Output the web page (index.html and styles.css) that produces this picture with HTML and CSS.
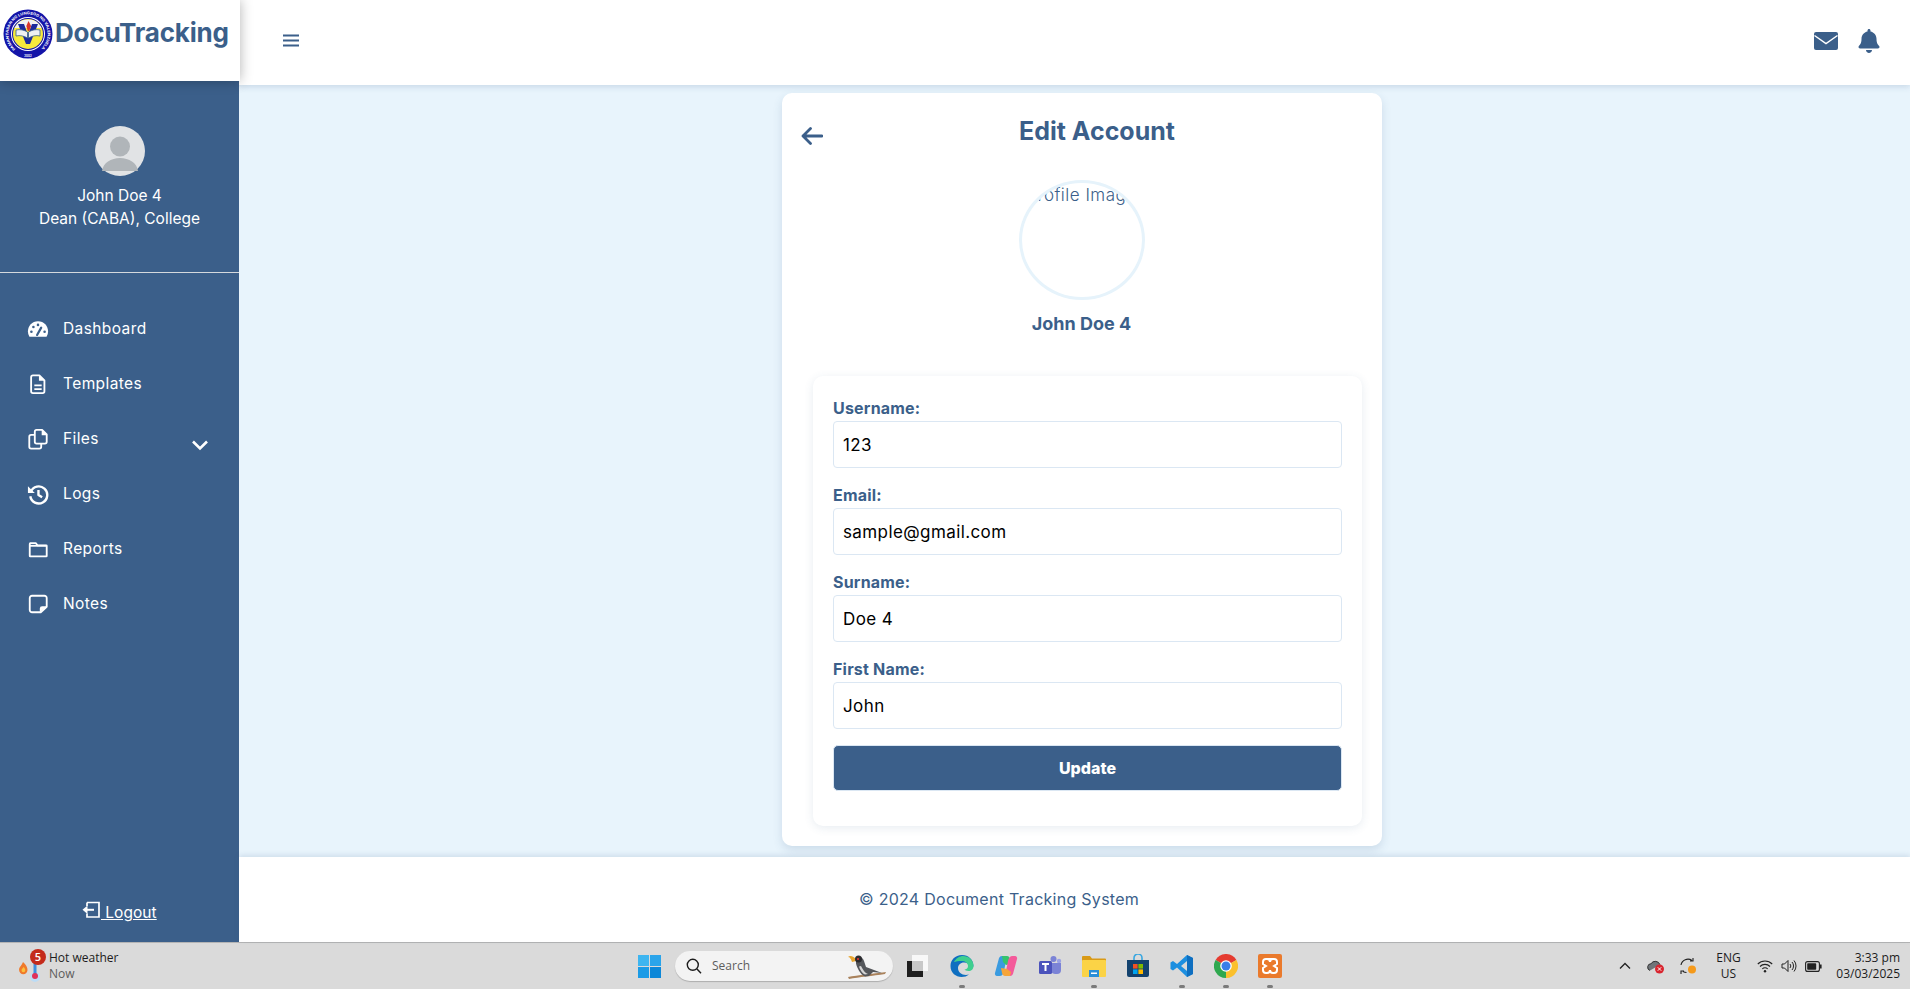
FILE: index.html
```html
<!DOCTYPE html>
<html lang="en">

<head>
  <meta charset="UTF-8">
  <title>DocuTracking - Edit Account</title>
  <link rel="stylesheet" href="styles.css">
</head>

<body>
  <div class="app">
    <aside class="sidebar">
      <div class="brand">
        <svg class="brand-logo" viewBox="0 0 50 50">
          <defs>
            <path id="ring-text" d="M12.400 40a19.600 19.600 0 1 1 25.200 0"></path>
          </defs>
          <circle cx="25" cy="25" r="24.500" fill="#1414a8"></circle>
          <circle cx="25" cy="25" r="17" fill="#fff"></circle>
          <circle cx="25" cy="25" r="16" fill="#1414a8"></circle>
          <circle cx="25" cy="25" r="15" fill="#f7ea3c"></circle>
          <path d="M11.500 19a15 15 0 0 1 27 0z" fill="#f1f2f4"></path>
          <path d="M15 15h6l4 11 4-11h6l-8 20h-4z" fill="#1c2a9c"></path>
          <path d="M13 21c4-1 8 0 11.500 2v6c-3.500-2-7.500-3-11.500-2z" fill="#eef0f3" stroke="#3b5f8a" stroke-width=".8"></path>
          <path d="M37 21c-4-1-8 0-11.500 2v6c3.500-2 7.500-3 11.500-2z" fill="#eef0f3" stroke="#3b5f8a" stroke-width=".8"></path>
          <path d="M25.500 12l-2.200 5 1.500 5h1.500l1.800-5z" fill="#d8352a"></path>
          <text class="logo-ring-text"><textPath href="#ring-text" textLength="94" lengthAdjust="spacingAndGlyphs">PAMANTASAN NG LUNGSOD NG VALENZUELA</textPath></text>
          <text class="logo-year" x="25" y="47.600" text-anchor="middle">2002</text>
        </svg>
        <span class="brand-name">DocuTracking</span>
      </div>

      <div class="profile">
        <svg class="profile-avatar" viewBox="0 0 50 50">
          <circle cx="25" cy="25" r="25" fill="#e1e3e5"></circle>
          <circle cx="25" cy="20.500" r="10" fill="#b0b5b9"></circle>
          <path d="M7 45c1-8 9-13 18-13s17 5 18 13z" fill="#b0b5b9"></path>
        </svg>
        <div class="profile-name">John Doe 4</div>
        <div class="profile-role">Dean (CABA), College</div>
      </div>

      <nav class="nav">
        <a class="nav-item" href="#">
          <svg class="nav-icon" viewBox="0 0 24 24">
            <path fill="#fff" d="M12 3.500C5.600 3.500 1 8.600 1 14.600c0 1.900.5 3.700 1.400 5.300.2.300.5.6.9.6h17.400c.4 0 .7-.3.9-.6.9-1.600 1.400-3.400 1.400-5.300C23 8.600 18.400 3.500 12 3.500z"></path>
            <g fill="#3b5f8a">
              <circle cx="4.800" cy="15" r="1.400"></circle>
              <circle cx="7" cy="9.800" r="1.400"></circle>
              <circle cx="12" cy="7.500" r="1.400"></circle>
              <circle cx="19.200" cy="15" r="1.400"></circle>
            </g>
            <path d="M11 18.500l4.500-8" stroke="#3b5f8a" stroke-width="2.400" stroke-linecap="round"></path>
          </svg>
          <span>Dashboard</span>
        </a>
        <a class="nav-item" href="#">
          <svg class="nav-icon" viewBox="0 0 24 24">
            <path class="line" d="M6.500 2.500h7l5.500 5.500v12a2 2 0 0 1-2 2H6.500a2 2 0 0 1-2-2v-15.500a2 2 0 0 1 2-2z"></path>
            <path d="M13 2.500l6 6h-6z" fill="#fff"></path>
            <path class="line" d="M8 13.500h8M8 17.500h8"></path>
          </svg>
          <span>Templates</span>
        </a>
        <a class="nav-item" href="#">
          <svg class="nav-icon" viewBox="0 0 24 24">
            <path class="line" d="M10.500 2h6l5 5v8a2 2 0 0 1-2 2h-9a2 2 0 0 1-2-2v-11a2 2 0 0 1 2-2z"></path>
            <path d="M16 2l6 6h-6z" fill="#fff"></path>
            <path class="line" d="M8.500 7.500h-4a2 2 0 0 0-2 2v11a2 2 0 0 0 2 2h9a2 2 0 0 0 2-2v-3.500"></path>
          </svg>
          <span>Files</span>
          <svg class="nav-chevron" viewBox="0 0 18 12">
            <path d="M2 2.500l7 7 7-7"></path>
          </svg>
        </a>
        <a class="nav-item" href="#">
          <svg class="nav-icon" viewBox="0 0 24 24">
            <path class="line thick" d="M4.200 9.500a9.300 9.300 0 1 1-.6 5"></path>
            <path d="M1 3.500v7.500h7.500z" fill="#fff"></path>
            <path class="line thick" d="M12.500 7.500v5.500l4 2.500"></path>
          </svg>
          <span>Logs</span>
        </a>
        <a class="nav-item" href="#">
          <svg class="nav-icon" viewBox="0 0 24 24">
            <path class="line" d="M3 7a2 2 0 0 1 .5-1.500h6l2 2.500h9.500a.5.5 0 0 1 .5.5v11a.5.5 0 0 1-.5.5h-17.500a.5.5 0 0 1-.5-.5z"></path>
            <path class="line" d="M3 8.500h18"></path>
          </svg>
          <span>Reports</span>
        </a>
        <a class="nav-item" href="#">
          <svg class="nav-icon" viewBox="0 0 24 24">
            <path class="line" d="M5.500 3h13.500a2.500 2.500 0 0 1 2.500 2.500v9.500l-6.500 6h-9.500a2.500 2.500 0 0 1-2.500-2.500v-13a2.500 2.500 0 0 1 2.500-2.500z"></path>
            <path d="M14 21v-4a2.500 2.500 0 0 1 2.500-2.500h5z" fill="#fff"></path>
          </svg>
          <span>Notes</span>
        </a>
      </nav>

      <a class="logout" href="#">
        <svg class="logout-icon" viewBox="0 0 20 18">
          <path d="M6 1.500h12v14.500h-12v-3.500M6 5v-3.500" fill="none" stroke="#fff" stroke-width="1.700"></path>
          <path d="M13 8.800h-9" fill="none" stroke="#fff" stroke-width="2"></path>
          <path d="M6.500 4.500l-5 4.300 5 4.300z" fill="#fff"></path>
        </svg>
        <span class="logout-text">&nbsp;Logout</span>
      </a>
    </aside>

    <div class="content">
      <header class="topbar">
        <svg class="menu-icon" viewBox="0 0 16 13">
          <path d="M0 1.500h16M0 6.500h16M0 11.500h16"></path>
        </svg>
        <div class="topbar-actions">
          <svg class="mail-icon" viewBox="0 0 24 18">
            <rect width="24" height="18" rx="2" fill="#3b5f8a"></rect>
            <path d="M0.500 3.500l11.500 8 11.500-8" fill="none" stroke="#fff" stroke-width="1.500"></path>
          </svg>
          <svg class="bell-icon" viewBox="0 0 448 512">
            <path fill="#3b5f8a" d="M224 512c35.320 0 63.970-28.650 63.970-64H160.030c0 35.350 28.650 64 63.970 64zm215.390-149.710c-19.320-20.760-55.470-51.990-55.470-154.290 0-77.700-54.480-139.900-127.940-155.160V32c0-17.670-14.320-32-31.980-32s-31.980 14.330-31.980 32v20.840C118.560 68.100 64.080 130.300 64.080 208c0 102.300-36.150 133.530-55.470 154.290-6 6.450-8.660 14.160-8.610 21.710.11 16.400 12.980 32 32.100 32h383.800c19.120 0 32-15.600 32.100-32 .05-7.550-2.610-15.270-8.610-21.710z"></path>
          </svg>
        </div>
      </header>

      <main class="main">
        <section class="card">
          <div class="card-head">
            <svg class="back-icon" viewBox="0 0 22 18">
              <path d="M21 9H2M9.500 1.500L2 9l7.500 7.500"></path>
            </svg>
            <h2 class="card-title">Edit Account</h2>
          </div>

          <div class="photo">
            <div class="photo-frame">Profile Image</div>
            <div class="photo-name">John Doe 4</div>
          </div>

          <form class="form-box">
            <div class="field">
              <label for="username">Username:</label>
              <input type="text" id="username" value="123">
            </div>
            <div class="field">
              <label for="email">Email:</label>
              <input type="text" id="email" value="sample@gmail.com">
            </div>
            <div class="field">
              <label for="surname">Surname:</label>
              <input type="text" id="surname" value="Doe 4">
            </div>
            <div class="field">
              <label for="firstname">First Name:</label>
              <input type="text" id="firstname" value="John">
            </div>
            <button class="btn-update" type="button">Update</button>
          </form>
        </section>
      </main>

      <footer class="footer">© 2024 Document Tracking System</footer>
    </div>
  </div>

  <div class="taskbar">
    <div class="weather">
      <svg class="weather-icon" viewBox="0 0 34 34">
        <path d="M7 13c3 3 4.500 5 4.500 8a4.200 4.200 0 0 1-8.400 0c0-3 2-3.500 3.900-8z" fill="#f0792a"></path>
        <path d="M7.500 18c1.300 1.200 1.800 2.200 1.800 3.300a1.900 1.900 0 0 1-3.800 0c0-1.300 1.200-2 2-3.300z" fill="#fbc13c"></path>
        <circle cx="19" cy="28" r="5" fill="#bcdcf5"></circle>
        <rect x="17.500" y="10" width="3" height="16" fill="#3d8fe0"></rect>
        <circle cx="19" cy="27" r="3" fill="#e0305a"></circle>
        <circle class="weather-badge" cx="22" cy="8" r="8" fill="#c42b1c"></circle>
        <text class="weather-count" x="22" y="12" text-anchor="middle">5</text>
      </svg>
      <div class="weather-text">
        <div>Hot weather</div>
        <div class="weather-sub">Now</div>
      </div>
    </div>

    <svg class="start-icon" viewBox="0 0 23 23">
      <rect width="11" height="11" fill="#3db5f0"></rect>
      <rect x="12" width="11" height="11" fill="#2aa4ea"></rect>
      <rect y="12" width="11" height="11" fill="#1b9be6"></rect>
      <rect x="12" y="12" width="11" height="11" fill="#0c87d8"></rect>
    </svg>

    <div class="search">
      <svg class="search-icon" viewBox="0 0 16 16">
        <circle cx="6.800" cy="6.800" r="5.500"></circle>
        <path d="M11 11l4 4.300"></path>
      </svg>
      <span class="search-label">Search</span>
      <svg class="search-bird" viewBox="0 0 40 28">
        <path d="M1 25c10-2 24-3 38-5l-1 2c-12 2-26 3-36 5z" fill="#a9825c"></path>
        <path d="M9 7c3-3 7-2 8 2l2 6 16 6-9-1-4 4-4 .5c-5-2-8-9-9-13z" fill="#54565a"></path>
        <path d="M14 14c2 4 4 7 7 8l-3 .5c-3-1-5-5-6-8z" fill="#d5d5d5"></path>
        <path d="M9 7C6 4 3 3 1 5c2 0 3 2 4 5l4-1z" fill="#e8a52f"></path>
        <circle cx="11.500" cy="7" r="3.500" fill="#2b2b2f"></circle>
        <circle cx="11" cy="7" r="1" fill="#e33"></circle>
      </svg>
    </div>

    <div class="dock">
      <div class="dock-item">
        <svg class="dock-icon" viewBox="0 0 24 24">
          <rect x="6" y="1" width="16" height="16" fill="#f8f8f8"></rect>
          <rect x="1" y="7" width="16" height="16" fill="#1e1e1e"></rect>
          <rect x="6" y="7" width="11" height="10" fill="#c8c8c8"></rect>
        </svg>
      </div>
      <div class="dock-item is-open">
        <svg class="dock-icon" viewBox="0 0 24 24">
          <path d="M12 1C5 1 .5 6 .5 12c0 7 5.500 11 11 11 3 0 5.500-.8 7.500-2.500-6 1.500-11-1.500-11-6.500 0-3 2.500-5.500 6-5.500 3 0 5 1.500 5 4h4.500C23.500 5.500 18.500 1 12 1z" fill="#0f6fc0"></path>
          <path d="M4 8c2-4 6-6 9-6 6 0 10.500 4 10.500 10 0 3-2 5-5 5-2 0-3.500-.8-4-1.500 2 0 3.500-1.500 3.500-3.500 0-3-3-5-6.500-5-3 0-6 .5-7.500 1z" fill="#3fcf8e"></path>
        </svg>
      </div>
      <div class="dock-item">
        <svg class="dock-icon" viewBox="0 0 24 24">
          <path d="M8 2h5l-3 15c-.5 3-2 5-4.500 5H3c-1.500 0-2.500-1.500-2-3L4.500 6C5 3.500 6 2 8 2z" fill="#3a9be0"></path>
          <path d="M8 2h5c1.500 0 2.500 1 3 3l1 5-5 1-3-3z" fill="#35c46e"></path>
          <path d="M16 22h-5l3-15c.5-3 2-5 4.500-5H21c1.500 0 2.500 1.500 2 3l-3.500 13c-.5 2.500-1.500 4-3.500 4z" fill="#f45a9a"></path>
          <path d="M16 22h-5c-1.500 0-2.500-1-3-3l-1-5 6 1 4 3z" fill="#f5a53a"></path>
        </svg>
      </div>
      <div class="dock-item">
        <svg class="dock-icon" viewBox="0 0 24 24">
          <circle cx="15.500" cy="5" r="3" fill="#7b83d6"></circle>
          <circle cx="21" cy="7" r="2.200" fill="#9aa2e6"></circle>
          <path d="M12 9h11v7a4 4 0 0 1-4 4h-2a5 5 0 0 1-5-5z" fill="#7b83d6"></path>
          <rect x="1" y="7" width="13" height="13" rx="1.500" fill="#4b53bc"></rect>
          <path d="M4 10h7M7.500 10v7" stroke="#fff" stroke-width="2"></path>
        </svg>
      </div>
      <div class="dock-item is-open">
        <svg class="dock-icon" viewBox="0 0 24 24">
          <path d="M0 3a1 1 0 0 1 1-1h7l2 2.500h13a1 1 0 0 1 1 1V8H0z" fill="#d99a16"></path>
          <rect y="6" width="24" height="17" rx="1" fill="#fbd346"></rect>
          <rect x="7" y="16" width="10" height="7" fill="#2b8fd8"></rect>
          <rect x="9" y="18.500" width="6" height="1.500" fill="#fff"></rect>
        </svg>
      </div>
      <div class="dock-item">
        <svg class="dock-icon" viewBox="0 0 24 24">
          <path d="M8 6V4a4 4 0 0 1 8 0v2" fill="none" stroke="#3aa7e0" stroke-width="1.600"></path>
          <path d="M1 6h22v15a2 2 0 0 1-2 2H3a2 2 0 0 1-2-2z" fill="#13426e"></path>
          <rect x="7" y="10" width="4.600" height="4.600" fill="#f25022"></rect>
          <rect x="12.400" y="10" width="4.600" height="4.600" fill="#7fba00"></rect>
          <rect x="7" y="15.400" width="4.600" height="4.600" fill="#00a4ef"></rect>
          <rect x="12.400" y="15.400" width="4.600" height="4.600" fill="#ffb900"></rect>
        </svg>
      </div>
      <div class="dock-item is-open">
        <svg class="dock-icon" viewBox="0 0 24 24">
          <path d="M17 1l6 3v16l-6 3-10-9.500-4 3-2.500-1.500v-6.500l2.500-1.500 4 3z" fill="#1d8fe0"></path>
          <path d="M17 1l6 3v16l-6 3z" fill="#0f6fc0"></path>
          <path d="M17 7l-6 5 6 5z" fill="#dadada"></path>
        </svg>
      </div>
      <div class="dock-item is-open">
        <svg class="dock-icon" viewBox="0 0 24 24">
          <path d="M12 12L22.400 6A12 12 0 0 0 1.600 6z" fill="#e53b30"></path>
          <path d="M12 12L1.600 6A12 12 0 0 0 12 24z" fill="#2fa84f"></path>
          <path d="M12 12v12A12 12 0 0 0 22.400 6z" fill="#fbc02d"></path>
          <circle cx="12" cy="12" r="5.800" fill="#fff"></circle>
          <circle cx="12" cy="12" r="4.500" fill="#3a7fe8"></circle>
        </svg>
      </div>
      <div class="dock-item is-open">
        <svg class="dock-icon" viewBox="0 0 24 24">
          <rect width="24" height="24" rx="2" fill="#ea7a2c"></rect>
          <path d="M8 5h8M5 8v2l3 2-3 2v2a3 3 0 0 0 3 3h1a3 3 0 0 0 3-3 3 3 0 0 0 3 3h1a3 3 0 0 0 3-3v-2l-3-2 3-2V8a3 3 0 0 0-3-3h-1a3 3 0 0 0-3 3 3 3 0 0 0-3-3H8a3 3 0 0 0-3 3z" fill="none" stroke="#fff" stroke-width="2"></path>
        </svg>
      </div>
    </div>

    <div class="tray">
      <div class="tray-item tray-caret">
        <svg viewBox="0 0 12 8" width="12" height="8"><path d="M1 6.500l5-5 5 5" fill="none" stroke="#222" stroke-width="1.300"></path></svg>
      </div>
      <div class="tray-item tray-wide">
        <svg viewBox="0 0 18 16" width="18" height="16">
          <path d="M3 12.500a3.500 3.500 0 0 1 1-6.800 5 5 0 0 1 9 1" fill="#70757a" stroke="#333" stroke-width="1"></path>
          <circle cx="12.500" cy="11" r="4.500" fill="#d9252f"></circle>
          <path d="M10.800 9.300l3.400 3.400M14.200 9.300l-3.400 3.400" stroke="#fff" stroke-width="1"></path>
        </svg>
      </div>
      <div class="tray-item tray-wide">
        <svg viewBox="0 0 18 18" width="18" height="18">
          <path d="M2 8a7 7 0 0 1 11-4.500M14 1v3h-3M2 17v-3h3M4 14.500c1 .6 2 1 3.500 1" fill="none" stroke="#222" stroke-width="1.100"></path>
          <circle cx="13" cy="12.500" r="4" fill="#f59a1b"></circle>
        </svg>
      </div>
      <div class="tray-lang">
        <div>ENG</div>
        <div>US</div>
      </div>
      <div class="tray-item">
        <svg viewBox="0 0 16 14" width="16" height="14">
          <path d="M.8 5a10 10 0 0 1 14.400 0M3 7.500a7 7 0 0 1 10 0M5.300 10a3.600 3.600 0 0 1 5.400 0" fill="none" stroke="#222" stroke-width="1.100"></path>
          <circle cx="8" cy="12.300" r="1.200" fill="#222"></circle>
        </svg>
      </div>
      <div class="tray-item">
        <svg viewBox="0 0 16 14" width="16" height="14">
          <path d="M1 5h2.500L7 1.500v11L3.500 9H1z" fill="none" stroke="#222" stroke-width="1"></path>
          <path d="M9 5a3 3 0 0 1 0 4M11 3a6 6 0 0 1 0 8M13 1.500a8.500 8.500 0 0 1 0 11" fill="none" stroke="#222" stroke-width="1"></path>
        </svg>
      </div>
      <div class="tray-item">
        <svg viewBox="0 0 17 11" width="17" height="11">
          <rect x=".6" y=".6" width="13.800" height="9.800" rx="2" fill="none" stroke="#222" stroke-width="1.100"></rect>
          <rect x="2.200" y="2.200" width="9" height="6.600" rx=".8" fill="#222"></rect>
          <rect x="15" y="3.500" width="1.600" height="4" fill="#222"></rect>
        </svg>
      </div>
      <div class="tray-clock">
        <div>3:33 pm</div>
        <div>03/03/2025</div>
      </div>
    </div>
  </div>
</body>

</html>
```

FILE: styles.css
```css
* {
  box-sizing: border-box;
}

body {
  margin: 0;
  height: 100vh;
  display: flex;
  flex-direction: column;
  overflow: hidden;
  font-family: Inter, "Liberation Sans", sans-serif;
  color: #3b5f8a;
  background-color: #e8f4fc;
}

.app {
  flex: 1;
  display: flex;
  min-height: 0;
}

/* sidebar */
.sidebar {
  width: 239px;
  flex-shrink: 0;
  display: flex;
  flex-direction: column;
  background-color: #3b5f8a;
  color: #fff;
}

.brand {
  width: 240px;
  height: 81px;
  flex-shrink: 0;
  display: flex;
  align-items: flex-start;
  padding: 9px 0 0 3px;
  background-color: #fff;
  box-shadow: 0 0 12px rgba(0, 0, 0, 0.3);
  position: relative;
  z-index: 3;
}

.brand-logo {
  width: 50px;
  height: 50px;
  flex-shrink: 0;
}

.logo-ring-text {
  font-size: 3.700px;
  font-weight: 700;
  fill: #fff;
}

.logo-year {
  font-size: 2.800px;
  font-weight: 700;
  fill: #fff;
}

.brand-name {
  margin: 5px 0 0 2px;
  font-size: 26px;
  line-height: 38px;
  font-weight: 700;
  letter-spacing: -0.2px;
  color: #3b5f8a;
}

.profile {
  display: flex;
  flex-direction: column;
  align-items: center;
  padding-top: 45px;
  height: 192px;
  border-bottom: 1px solid #d5d9dd;
  font-size: 15.500px;
  line-height: 23px;
}

.profile-avatar {
  width: 50px;
  height: 50px;
  margin-bottom: 8px;
}

.nav {
  display: flex;
  flex-direction: column;
  padding-top: 28px;
}

.nav-item {
  height: 55px;
  display: flex;
  align-items: center;
  padding-left: 27px;
  color: #fff;
  text-decoration: none;
  font-size: 15.500px;
  letter-spacing: 0.4px;
}

.nav-icon {
  width: 22px;
  height: 22px;
  margin-right: 14px;
  flex-shrink: 0;
}

.line {
  fill: none;
  stroke: #fff;
  stroke-width: 2;
  stroke-linejoin: round;
}

.line.thick {
  stroke-width: 2.600;
}

.nav-chevron {
  width: 18px;
  height: 12px;
  margin: 12px 0 0 auto;
  margin-right: 30px;
}

.nav-chevron path {
  fill: none;
  stroke: #fff;
  stroke-width: 2.600;
}

.logout {
  margin: auto 0 18px 81px;
  display: flex;
  align-items: flex-end;
  color: #fff;
  font-size: 15.500px;
  line-height: 22px;
}

.logout-icon {
  width: 20px;
  height: 18px;
  margin-bottom: 5px;
}

.logout-text {
  text-decoration: underline;
}

/* main column */
.content {
  flex: 1;
  min-width: 0;
  display: flex;
  flex-direction: column;
}

.topbar {
  height: 85px;
  flex-shrink: 0;
  display: flex;
  align-items: center;
  justify-content: space-between;
  padding: 0 30px 4px 44px;
  background-color: #fff;
  box-shadow: 0 2px 6px rgba(59, 95, 138, 0.18);
  position: relative;
  z-index: 2;
}

.menu-icon {
  width: 16px;
  height: 13px;
}

.menu-icon path {
  fill: none;
  stroke: #3b5f8a;
  stroke-width: 2;
}

.topbar-actions {
  display: flex;
  align-items: center;
  gap: 20px;
}

.mail-icon {
  width: 24px;
  height: 18px;
}

.bell-icon {
  width: 22px;
  height: 24px;
}

.main {
  flex: 1;
  min-height: 0;
  padding: 8px 0 0 543px;
}

.card {
  width: 600px;
  height: 753px;
  padding: 20px 20px 0 19px;
  background-color: #fff;
  border-radius: 10px;
  box-shadow: 0 4px 10px rgba(59, 95, 138, 0.16);
}

.card-head {
  display: flex;
  align-items: flex-start;
}

.back-icon {
  width: 22px;
  height: 18px;
  margin-top: 14px;
  flex-shrink: 0;
}

.back-icon path {
  fill: none;
  stroke: #3b5f8a;
  stroke-width: 2.800;
  stroke-linecap: round;
  stroke-linejoin: round;
}

.card-title {
  flex: 1;
  margin: 0 -9px 0 0;
  text-align: center;
  font-size: 25px;
  line-height: 36px;
  font-weight: 700;
}

.photo {
  display: flex;
  flex-direction: column;
  align-items: center;
  margin-top: 31px;
}

.photo-frame {
  width: 126px;
  height: 120px;
  border: 3px solid #e6f3fb;
  border-radius: 50%;
  overflow: hidden;
  text-align: center;
  white-space: nowrap;
  font-size: 17px;
  letter-spacing: 0.5px;
  line-height: 24px;
  font-weight: 300;
}

.photo-name {
  margin-top: 12px;
  font-size: 18px;
  line-height: 24px;
  font-weight: 700;
}

.form-box {
  display: flex;
  flex-direction: column;
  gap: 15px;
  width: 549px;
  height: 450px;
  margin: 40px 0 0 12px;
  padding: 20px 20px 0;
  background-color: #fff;
  border-radius: 10px;
  box-shadow: 0 2px 10px rgba(59, 95, 138, 0.12);
}

.field label {
  display: block;
  margin-bottom: 1px;
  font-size: 16px;
  line-height: 24px;
  font-weight: 700;
  letter-spacing: 0.2px;
}

.field input {
  display: block;
  width: 100%;
  height: 47px;
  padding: 0 9px;
  border: 1px solid #dbe7f3;
  border-radius: 4px;
  outline: none;
  font-family: inherit;
  font-size: 17px;
  letter-spacing: 0.4px;
  color: #000;
  background-color: #fff;
}

.btn-update {
  height: 46px;
  margin-top: 1px;
  border: 1px solid #dbe7f3;
  border-radius: 5px;
  background-color: #3b5f8a;
  color: #fff;
  font-family: inherit;
  font-size: 16px;
  font-weight: 800;
}

.footer {
  height: 85px;
  flex-shrink: 0;
  padding: 30px 0 0 620px;
  background-color: #fff;
  font-size: 16px;
  letter-spacing: 0.27px;
  line-height: 24px;
  box-shadow: 0 -2px 5px rgba(59, 95, 138, 0.14);
  position: relative;
}

/* windows taskbar */
.taskbar {
  height: 47px;
  flex-shrink: 0;
  display: flex;
  align-items: center;
  border-top: 1px solid #b4b4b4;
  background-color: #dadada;
  font-family: "Open Sans", "Noto Sans", sans-serif;
  font-size: 12px;
  line-height: 16px;
  color: #1c1c1c;
}

.weather {
  width: 638px;
  flex-shrink: 0;
  display: flex;
  align-items: center;
  padding-left: 16px;
}

.weather-icon {
  width: 34px;
  height: 34px;
  margin-right: -1px;
}

.weather-count {
  font-size: 11px;
  font-weight: 600;
  fill: #fff;
}

.weather-sub {
  color: #5c5c5c;
}

.start-icon {
  width: 23px;
  height: 23px;
  flex-shrink: 0;
}

.search {
  width: 218px;
  height: 30px;
  margin: 0 3px 0 14px;
  flex-shrink: 0;
  display: flex;
  align-items: center;
  padding: 0 6px 0 11px;
  background-color: #f3f3f3;
  border-radius: 15px;
  box-shadow: 0 1px 1px rgba(0, 0, 0, 0.2);
}

.search-icon {
  width: 16px;
  height: 16px;
}

.search-icon circle,
.search-icon path {
  fill: none;
  stroke: #1c1c1c;
  stroke-width: 1.400;
}

.search-label {
  margin-left: 10px;
  color: #5d5d5d;
}

.search-bird {
  width: 40px;
  height: 28px;
  margin-left: auto;
}

.dock {
  display: flex;
}

.dock-item {
  width: 44px;
  height: 47px;
  display: flex;
  align-items: center;
  justify-content: center;
  position: relative;
}

.dock-icon {
  width: 24px;
  height: 24px;
}

.is-open::after {
  content: "";
  position: absolute;
  left: 19px;
  bottom: 2px;
  width: 6px;
  height: 3px;
  border-radius: 2px;
  background-color: #7b7b7b;
}

.tray {
  margin-left: auto;
  display: flex;
  align-items: center;
  padding-right: 10px;
}

.tray-item {
  width: 24px;
  display: flex;
  justify-content: center;
}

.tray-caret {
  width: 30px;
}

.tray-wide {
  width: 32px;
}

.tray-lang {
  width: 49px;
  text-align: center;
}

.tray-clock {
  width: 75px;
  text-align: right;
}
```
